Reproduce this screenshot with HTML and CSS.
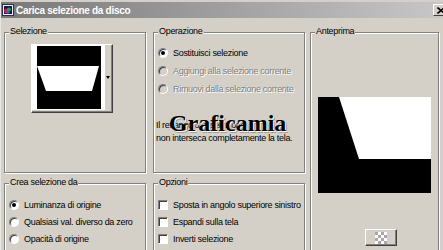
FILE: index.html
```html
<!DOCTYPE html>
<html lang="it">
<head>
    <meta charset="UTF-8">
    <title>Carica selezione da disco</title>
    <link rel="stylesheet" href="styles.css">
</head>
<body>
    <div class="window">
        <div class="titlebar">
            <svg class="app-icon" width="12" height="12" viewBox="0 0 12 12">
                <rect x="0.5" y="0.5" width="11" height="11" fill="#f0f0f4" stroke="#303050"/>
                <rect x="2" y="2" width="8" height="8" fill="#101848"/>
                <circle cx="4.5" cy="7" r="2.5" fill="#d02030"/>
                <circle cx="7" cy="5.5" r="2" fill="#20a050"/>
                <circle cx="6" cy="8" r="1.6" fill="#3070e0"/>
            </svg>
            <span class="title">Carica selezione da disco</span>
            <span class="close-btn">
                <svg width="8" height="7" viewBox="0 0 8 7">
                    <path d="M0.5 0.5 L7.5 6.5 M7.5 0.5 L0.5 6.5" stroke="#000" stroke-width="1.6"/>
                </svg>
            </span>
        </div>

        <div class="content">
            <div class="col col-left">
                <div class="group group-top">
                    <span class="group-title">Selezione</span>
                    <div class="thumb-btn">
                        <div class="thumb-well">
                            <svg width="64" height="63" viewBox="0 0 64 63">
                                <rect width="64" height="63" fill="#000"/>
                                <polygon points="0,20 62,20 55,45 9,45" fill="#fff"/>
                            </svg>
                        </div>
                        <div class="thumb-arrow"></div>
                    </div>
                </div>
                <div class="group group-bottom">
                    <span class="group-title">Crea selezione da</span>
                    <div class="option"><span class="radio checked"></span>Luminanza di origine</div>
                    <div class="option"><span class="radio"></span>Qualsiasi val. diverso da zero</div>
                    <div class="option"><span class="radio"></span>Opacità di origine</div>
                </div>
            </div>

            <div class="col col-mid">
                <div class="group group-top">
                    <span class="group-title">Operazione</span>
                    <div class="option tall"><span class="radio checked"></span>Sostituisci selezione</div>
                    <div class="option tall disabled"><span class="radio"></span>Aggiungi alla selezione corrente</div>
                    <div class="option tall disabled"><span class="radio"></span>Rimuovi dalla selezione corrente</div>
                    <div class="message">
                        Il rettangolo di selezione<br>
                        non interseca completamente la tela.
                        <span class="watermark">Graficamia</span>
                    </div>
                </div>
                <div class="group group-bottom">
                    <span class="group-title">Opzioni</span>
                    <div class="option"><span class="checkbox"></span>Sposta in angolo superiore sinistro</div>
                    <div class="option"><span class="checkbox"></span>Espandi sulla tela</div>
                    <div class="option"><span class="checkbox"></span>Inverti selezione</div>
                </div>
            </div>

            <div class="group preview-group">
                <span class="group-title">Anteprima</span>
                <svg class="preview" width="113" height="96" viewBox="0 0 113 96">
                    <rect width="113" height="96" fill="#000"/>
                    <polygon points="21,0 113,0 113,62 41,62" fill="#fff"/>
                </svg>
                <div class="zoom-btn">
                    <svg width="12" height="12" viewBox="0 0 12 12">
                        <rect width="12" height="12" fill="#fff"/>
                        <path d="M0 0h3v3H0z M6 0h3v3H6z M3 3h3v3H3z M9 3h3v3H9z M0 6h3v3H0z M6 6h3v3H6z M3 9h3v3H3z M9 9h3v3H9z" fill="#a8a8a8"/>
                    </svg>
                </div>
            </div>
        </div>
    </div>
</body>
</html>
```

FILE: styles.css
```css
body {
    margin: 0;
    overflow: hidden;
    background-color: #d4d0c8;
    font-family: "Liberation Sans", Arial, sans-serif;
    font-size: 9px;
    letter-spacing: -0.3px;
    color: #000;
}
.window {
    padding-top: 2px;
    border-left: 1px solid #e8e6e0;
}
.titlebar {
    display: flex;
    align-items: center;
    height: 16px;
    background: linear-gradient(to right, #787878, #c8c8c8);
    margin-right: -6px;
}
.app-icon {
    margin-left: 1px;
    margin-right: 2px;
}
.title {
    flex: 1;
    color: #fff;
    font-weight: bold;
    font-size: 10px;
}
.close-btn {
    display: flex;
    align-items: center;
    justify-content: flex-start;
    box-sizing: border-box;
    width: 16px;
    height: 12px;
    padding-left: 3px;
    background: #d4d0c8;
    border: 1px solid;
    border-color: #fff #404040 #404040 #fff;
}
.content {
    display: flex;
    align-items: flex-start;
    padding: 14px 0 0 3px;
}
.col {
    display: flex;
    flex-direction: column;
    gap: 10px;
}
.col-left {
    width: 142px;
    margin-right: 7px;
}
.col-mid {
    width: 152px;
    margin-right: 5px;
}
.group {
    position: relative;
    box-sizing: border-box;
    border: 1px solid #808080;
    box-shadow: inset 1px 1px #fff, 1px 1px #fff;
}
.group-title {
    position: absolute;
    top: -7px;
    left: 4px;
    padding: 0 1px;
    line-height: 11px;
    background: #d4d0c8;
}
.group-top {
    height: 141px;
    padding-top: 11px;
}
.group-bottom {
    height: 80px;
    padding-top: 12px;
}

/* thumbnail button */
.thumb-btn {
    display: flex;
    box-sizing: border-box;
    width: 82px;
    height: 69px;
    margin-left: 26px;
    border: 1px solid;
    border-color: #fff #404040 #404040 #fff;
    box-shadow: inset -1px -1px #808080;
}
.thumb-well {
    background: #fff;
    padding: 1px 4px 1px 5px;
    align-self: flex-start;
}
.thumb-well svg {
    display: block;
}
.thumb-arrow {
    width: 0;
    height: 0;
    margin: 31px 0 0 1px;
    border-left: 2px solid transparent;
    border-right: 2px solid transparent;
    border-top: 3px solid #000;
}

/* radios and checkboxes */
.option {
    display: flex;
    align-items: center;
    height: 17px;
    padding-left: 4px;
    white-space: nowrap;
}
.option.tall {
    height: 18px;
}
.radio,
.checkbox {
    box-sizing: border-box;
    width: 10px;
    height: 10px;
    margin-right: 5px;
    background: #fff;
    border: 1px solid;
    border-color: #808080 #fff #fff #808080;
    box-shadow: inset 1px 1px #404040;
    position: relative;
    flex-shrink: 0;
}
.radio {
    border-radius: 50%;
}
.radio.checked::after {
    content: "";
    position: absolute;
    left: 2px;
    top: 2px;
    width: 4px;
    height: 4px;
    border-radius: 50%;
    background: #000;
}
.disabled {
    color: #808080;
    text-shadow: 1px 1px 0 #fff;
}
.disabled .radio {
    background: #d4d0c8;
}

.message {
    position: relative;
    margin-top: 21px;
    padding-left: 2px;
    line-height: 13px;
    white-space: nowrap;
}
.watermark {
    position: absolute;
    top: -8px;
    left: 15px;
    font-family: "Liberation Serif", "Times New Roman", serif;
    font-weight: bold;
    font-size: 24px;
    line-height: 24px;
    letter-spacing: 0;
    color: #000;
    text-shadow: 1px 1px 0 #fff, 2px 2px 0 #a09c94;
}

/* preview */
.preview-group {
    width: 129px;
    height: 240px;
}
.preview {
    display: block;
    margin: 64px 0 0 7px;
}
.zoom-btn {
    display: flex;
    align-items: center;
    justify-content: center;
    box-sizing: border-box;
    width: 32px;
    height: 17px;
    margin: 36px 0 0 54px;
    border: 1px solid;
    border-color: #fff #404040 #404040 #fff;
    box-shadow: inset -1px -1px #808080;
}
```
